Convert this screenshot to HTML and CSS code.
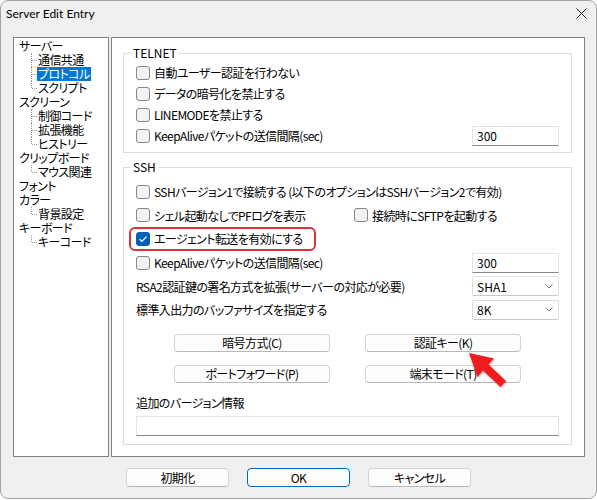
FILE: index.html
```html
<!DOCTYPE html>
<html lang="ja">
<head>
<meta charset="utf-8">
<title>Server Edit Entry</title>
<link rel="stylesheet" href="styles.css">
</head>
<body>
<div class="screen">
  <div class="window">
    <div class="titlebar">
      <span class="title">Server Edit Entry</span>
      <svg class="close" width="11" height="11" viewBox="0 0 11 11"><path d="M0.5 0.5 L10.5 10.5 M10.5 0.5 L0.5 10.5" stroke="#1a1a1a" stroke-width="1" fill="none"/></svg>
    </div>
    <div class="main">
      <div class="tree">
        <ul>
          <li><span class="t">サーバー</span>
            <ul class="children">
              <li><span class="t">通信共通</span></li>
              <li><span class="t sel">プロトコル</span></li>
              <li class="last"><span class="t">スクリプト</span></li>
            </ul>
          </li>
          <li><span class="t">スクリーン</span>
            <ul class="children">
              <li><span class="t">制御コード</span></li>
              <li><span class="t">拡張機能</span></li>
              <li class="last"><span class="t">ヒストリー</span></li>
            </ul>
          </li>
          <li><span class="t">クリップボード</span>
            <ul class="children">
              <li class="last"><span class="t">マウス関連</span></li>
            </ul>
          </li>
          <li><span class="t">フォント</span></li>
          <li><span class="t">カラー</span>
            <ul class="children">
              <li class="last"><span class="t">背景設定</span></li>
            </ul>
          </li>
          <li><span class="t">キーボード</span>
            <ul class="children">
              <li class="last"><span class="t">キーコード</span></li>
            </ul>
          </li>
        </ul>
      </div>
      <div class="pane">
        <fieldset class="group telnet">
          <legend>TELNET</legend>
          <div class="row"><label class="cb"><span class="box"></span>自動ユーザー認証を行わない</label></div>
          <div class="row"><label class="cb"><span class="box"></span>データの暗号化を禁止する</label></div>
          <div class="row"><label class="cb"><span class="box"></span>LINEMODEを禁止する</label></div>
          <div class="row"><label class="cb"><span class="box"></span>KeepAliveパケットの送信間隔(sec)</label><span class="field">300</span></div>
        </fieldset>
        <fieldset class="group ssh">
          <legend>SSH</legend>
          <div class="row"><label class="cb"><span class="box"></span>SSHバージョン1で接続する (以下のオプションはSSHバージョン2で有効)</label></div>
          <div class="row start"><label class="cb col1"><span class="box"></span>シェル起動なしでPFログを表示</label><label class="cb"><span class="box"></span>接続時にSFTPを起動する</label></div>
          <div class="row start"><label class="cb hl"><span class="box checked"><svg width="12" height="12" viewBox="0 0 12 12"><path d="M2.6 6.2 L4.9 8.4 L9.5 3.6" stroke="#fff" stroke-width="1.3" fill="none"/></svg></span>エージェント転送を有効にする</label></div>
          <div class="row"><label class="cb"><span class="box"></span>KeepAliveパケットの送信間隔(sec)</label><span class="field">300</span></div>
          <div class="row"><span class="lbl">RSA2認証鍵の署名方式を拡張(サーバーの対応が必要)</span><span class="select"><span>SHA1</span><svg width="8" height="5" viewBox="0 0 8 5"><path d="M0.5 0.5 L4 4 L7.5 0.5" stroke="#7a7a7a" fill="none"/></svg></span></div>
          <div class="row"><span class="lbl">標準入出力のバッファサイズを指定する</span><span class="select"><span>8K</span><svg width="8" height="5" viewBox="0 0 8 5"><path d="M0.5 0.5 L4 4 L7.5 0.5" stroke="#7a7a7a" fill="none"/></svg></span></div>
          <div class="btns">
            <span class="btn">暗号方式(C)</span>
            <span class="btn">認証キー(K)</span>
            <span class="btn">ポートフォワード(P)</span>
            <span class="btn">端末モード(T)</span>
          </div>
          <div class="extra-label">追加のバージョン情報</div>
          <div class="extra"></div>
        </fieldset>
      </div>
    </div>
    <div class="footer">
      <span class="btn fbtn">初期化</span>
      <span class="btn fbtn default">OK</span>
      <span class="btn fbtn">キャンセル</span>
    </div>
  </div>
  <svg class="arrow" width="597" height="500" viewBox="0 0 597 500">
    <defs>
      <filter id="sh" x="-20%" y="-20%" width="140%" height="140%">
        <feDropShadow dx="0.5" dy="1" stdDeviation="0.8" flood-color="#000" flood-opacity="0.35"/>
      </filter>
    </defs>
    <polygon points="469,353 494,358.5 488.5,364.5 506,381 500.5,387 483,370.5 477.5,377" fill="#ee1b1b" filter="url(#sh)"/>
  </svg>
</div>
</body>
</html>
```
FILE: styles.css
```css
body {
  margin: 0;
  background: #ffffff;
  font-family: "Noto Sans CJK JP", sans-serif;
  font-size: 12px;
  font-feature-settings: "palt";
  letter-spacing: -0.6px;
  color: #000;
}

.screen {
  position: relative;
  width: 597px;
  height: 500px;
}

.window {
  width: 597px;
  height: 499px;
  box-sizing: border-box;
  border: 1px solid #a3a3a3;
  border-radius: 8px;
  background: #f0f0f0;
  overflow: hidden;
}

.titlebar {
  height: 25px;
  display: flex;
  align-items: center;
  justify-content: space-between;
  padding-left: 5px;
  padding-right: 9px;
}

.title {
  font-family: "Lato", sans-serif;
  font-size: 12px;
  letter-spacing: 0;
  color: #000;
}

.close {
  display: block;
}

.main {
  display: flex;
  gap: 2px;
  padding: 11px 11px 0 12px;
  height: 420px;
}

.tree {
  width: 96px;
  flex: none;
  box-sizing: border-box;
  border: 1px solid #828282;
  background: #fff;
  padding-top: 1px;
  line-height: 14px;
}

.tree ul {
  list-style: none;
  margin: 0;
  padding: 0;
}

.tree li {
  line-height: 14px;
}

.tree .t {
  display: inline-block;
  vertical-align: top;
  height: 14px;
  line-height: 14px;
  padding-left: 5px;
  white-space: nowrap;
}

.tree .children li {
  position: relative;
  height: 14px;
  padding-left: 23px;
}

.tree .children .t {
  padding: 0 1px;
}

.tree .children li::before {
  content: "";
  position: absolute;
  left: 17px;
  top: 0;
  bottom: 0;
  border-left: 1px dotted #9a9a9a;
}

.tree .children li.last::before {
  bottom: 7px;
}

.tree .children li::after {
  content: "";
  position: absolute;
  left: 18px;
  top: 7px;
  width: 5px;
  border-top: 1px dotted #9a9a9a;
}

.tree .sel {
  background: #0078d7;
  color: #fff;
}

.pane {
  flex: 1;
  box-sizing: border-box;
  border: 1px solid #828282;
  background: #fff;
  padding: 8px 12px 0 11px;
}

.group {
  margin: 0;
  border: 1px solid #dcdcdc;
  padding: 2px 12px 6px;
  min-width: 0;
}

.group legend {
  margin-left: -5px;
  padding: 0 2px;
  line-height: 14px;
  height: 14px;
  letter-spacing: 0;
}

.ssh {
  margin-top: 7px;
  padding-top: 6px;
  padding-bottom: 8px;
}

.row {
  height: 21px;
  display: flex;
  align-items: center;
  justify-content: space-between;
}

.ssh .row {
  height: 23.6px;
}

.row.start {
  justify-content: flex-start;
}

.cb {
  display: flex;
  align-items: center;
  gap: 4px;
  white-space: nowrap;
}

.col1 {
  width: 218px;
}

.box {
  width: 14px;
  height: 14px;
  box-sizing: border-box;
  border: 1px solid #868686;
  border-radius: 3px;
  background: #f3f3f3;
  flex: none;
  display: flex;
  align-items: center;
  justify-content: center;
}

.box.checked {
  background: #005fb8;
  border-color: #005fb8;
}

.hl {
  height: 24px;
  box-sizing: border-box;
  border: 2px solid #d6333b;
  border-radius: 6px;
  margin-left: -7px;
  padding: 0 11px 0 5px;
}

.field {
  width: 87px;
  height: 20px;
  box-sizing: border-box;
  background: #fff;
  border: 1px solid #e3e3e3;
  border-bottom-color: #868686;
  padding: 0 4px;
  line-height: 18px;
  letter-spacing: 0;
}

.select {
  width: 87px;
  height: 20px;
  box-sizing: border-box;
  background: #fff;
  border: 1px solid #dedede;
  border-bottom-color: #c8c8c8;
  border-radius: 2px;
  padding: 0 5px 0 4px;
  display: flex;
  align-items: center;
  justify-content: space-between;
  letter-spacing: 0;
}

.btns {
  display: grid;
  grid-template-columns: 156px 156px;
  column-gap: 35px;
  row-gap: 13px;
  justify-content: center;
  margin-top: 12.4px;
}

.btn {
  height: 18px;
  box-sizing: border-box;
  border: 1px solid #d3d3d3;
  border-bottom-color: #b9b9b9;
  border-radius: 4px;
  background: #fdfdfd;
  display: flex;
  align-items: center;
  justify-content: center;
  white-space: nowrap;
}

.extra-label {
  margin-top: 13px;
  line-height: 14px;
  height: 14px;
}

.extra {
  margin-top: 6px;
  height: 20px;
  box-sizing: border-box;
  background: #fff;
  border: 1px solid #e3e3e3;
  border-bottom-color: #868686;
}

.footer {
  display: flex;
  justify-content: center;
  gap: 18px;
  padding-top: 11px;
}

.fbtn {
  width: 103px;
  height: 19px;
}

.fbtn.default {
  border-color: #0067c0;
}

.arrow {
  position: absolute;
  left: 0;
  top: 0;
  pointer-events: none;
}
```
